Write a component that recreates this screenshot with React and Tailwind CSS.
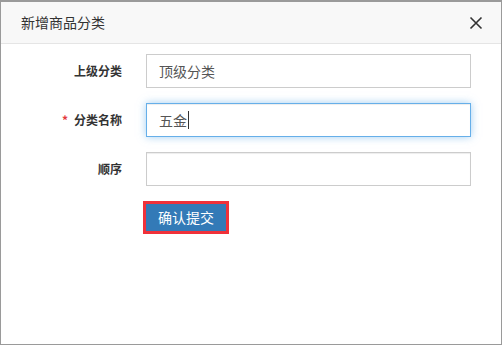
import React from 'react';

const font = { fontFamily: '"Noto Sans CJK SC", "Liberation Sans", sans-serif' };

function Row({ label, required, children }) {
  return (
    <div className="flex items-center">
      <div className="w-[121px] shrink-0 text-right text-[12px] font-bold text-[#333]">
        {required && <span className="mr-[6px] text-[#e4393c]">*</span>}
        {label}
      </div>
      <div className="ml-[24px] w-[325px]">{children}</div>
    </div>
  );
}

export default function App() {
  return (
    <div style={font} className="h-[345px] w-[502px] overflow-hidden border border-[#9a9a9a] border-t-2 bg-white">
      <div className="flex h-[42px] items-center justify-between border-b border-[#e5e5e5] bg-[#f8f8f8] pl-[20px] pr-[18px]">
        <span className="text-[14px] text-[#333]">新增商品分类</span>
        <svg width="14" height="14" viewBox="0 0 14 14" className="text-[#333]">
          <path d="M1.5 1.5L12.5 12.5M12.5 1.5L1.5 12.5" stroke="currentColor" strokeWidth="1.6" />
        </svg>
      </div>
      <div className="flex flex-col gap-[15px] pt-[10px]">
        <Row label="上级分类">
          <div className="flex h-[34px] items-center border border-[#ccc] px-[12px] text-[14px] text-[#555]">顶级分类</div>
        </Row>
        <Row label="分类名称" required>
          <div className="flex h-[34px] items-center border border-[#66afe9] px-[12px] text-[14px] text-[#555] shadow-[inset_0_1px_1px_rgba(0,0,0,0.075),0_0_8px_rgba(102,175,233,0.6)]">
            五金<span className="ml-[1px] h-[18px] w-px bg-[#333]" />
          </div>
        </Row>
        <Row label="顺序">
          <div className="h-[34px] border border-[#ccc] shadow-[inset_0_1px_1px_rgba(0,0,0,0.075)]" />
        </Row>
        <div className="pl-[142px]">
          <button className="h-[33px] w-[86px] border-[3px] border-[#f0313a] bg-[#337ab7] text-[14px] text-white">确认提交</button>
        </div>
      </div>
    </div>
  );
}
